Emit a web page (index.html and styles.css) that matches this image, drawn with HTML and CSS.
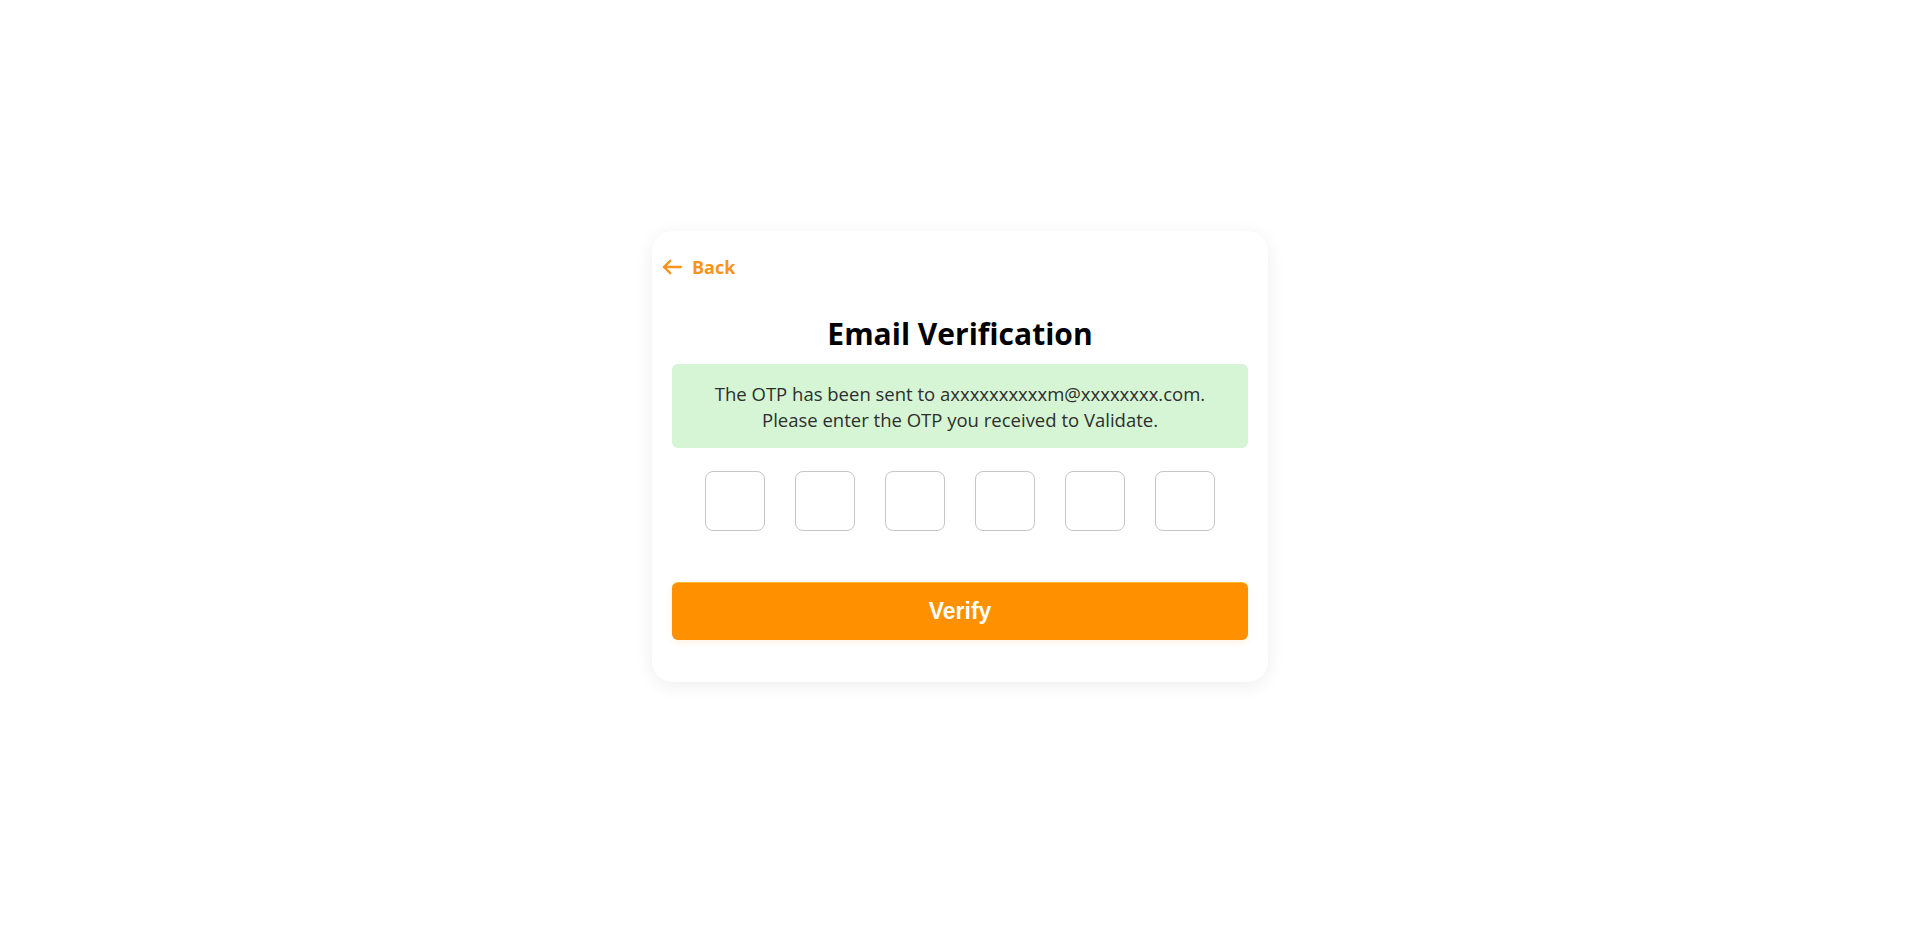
FILE: index.html
```html
<!DOCTYPE html>
<html lang="en">
<head>
<meta charset="utf-8">
<title>Email Verification</title>
<link rel="stylesheet" href="styles.css">
</head>
<body>
<main class="page">
  <section class="card">
    <a class="back" href="#">
      <svg class="back-icon" viewBox="0 0 20 16" width="20" height="16" aria-hidden="true">
        <path d="M18.8 8H2 M8.2 1.8L2 8l6.2 6.2" fill="none" stroke="currentColor" stroke-width="2.4" stroke-linecap="round" stroke-linejoin="round"/>
      </svg>
      <span>Back</span>
    </a>
    <h1 class="title">Email Verification</h1>
    <div class="notice">
      The OTP has been sent to axxxxxxxxxxm@xxxxxxxx.com.<br>
      Please enter the OTP you received to Validate.
    </div>
    <div class="otp">
      <input class="otp-box" type="text" maxlength="1">
      <input class="otp-box" type="text" maxlength="1">
      <input class="otp-box" type="text" maxlength="1">
      <input class="otp-box" type="text" maxlength="1">
      <input class="otp-box" type="text" maxlength="1">
      <input class="otp-box" type="text" maxlength="1">
    </div>
    <button class="verify" type="button">Verify</button>
  </section>
</main>
</body>
</html>
```
FILE: styles.css
```css
* {
  box-sizing: border-box;
}

html, body {
  margin: 0;
  padding: 0;
  background: #ffffff;
}

body {
  font-family: "Open Sans", Lato, sans-serif;
  color: #000;
}

.page {
  min-height: 100vh;
  display: flex;
  align-items: center;
  justify-content: center;
  padding-bottom: 19px;
}

.card {
  width: 616px;
  background: #fff;
  border-radius: 20px;
  box-shadow: 0 4px 18px rgba(0, 0, 0, 0.07);
  padding: 20px 20px 42px;
  display: flex;
  flex-direction: column;
}

.back {
  align-self: flex-start;
  display: inline-flex;
  align-items: center;
  gap: 10px;
  height: 28px;
  margin: 2px 0 0 -10px;
  color: #f7941d;
  text-decoration: none;
  font-size: 18px;
  font-weight: 700;
  line-height: 28px;
}

.back-icon {
  display: block;
}

.title {
  margin: 33px 0 10px;
  text-align: center;
  font-size: 30px;
  line-height: 40px;
  font-weight: 700;
  color: #000;
}

.notice {
  background: #d5f5d5;
  border-radius: 6px;
  padding: 17px 15px 15px;
  text-align: center;
  font-size: 18.5px;
  line-height: 26px;
  color: #2e2e2e;
}

.otp {
  display: flex;
  justify-content: center;
  gap: 30px;
  margin-top: 23px;
}

.otp-box {
  width: 60px;
  height: 60px;
  border: 1px solid #c6c6c6;
  border-radius: 8px;
  background: #fff;
  padding: 0;
  text-align: center;
  font-size: 22px;
  outline: none;
}

.verify {
  margin-top: 51px;
  height: 58px;
  width: 100%;
  border: none;
  border-top: 1px solid #ffb630;
  border-radius: 6px;
  background: #ff9100;
  color: #fff;
  font-family: "Liberation Sans", Arial, sans-serif;
  font-size: 23px;
  font-weight: 700;
  cursor: pointer;
  box-shadow: 0 3px 6px rgba(255, 160, 40, 0.12);
}
```
